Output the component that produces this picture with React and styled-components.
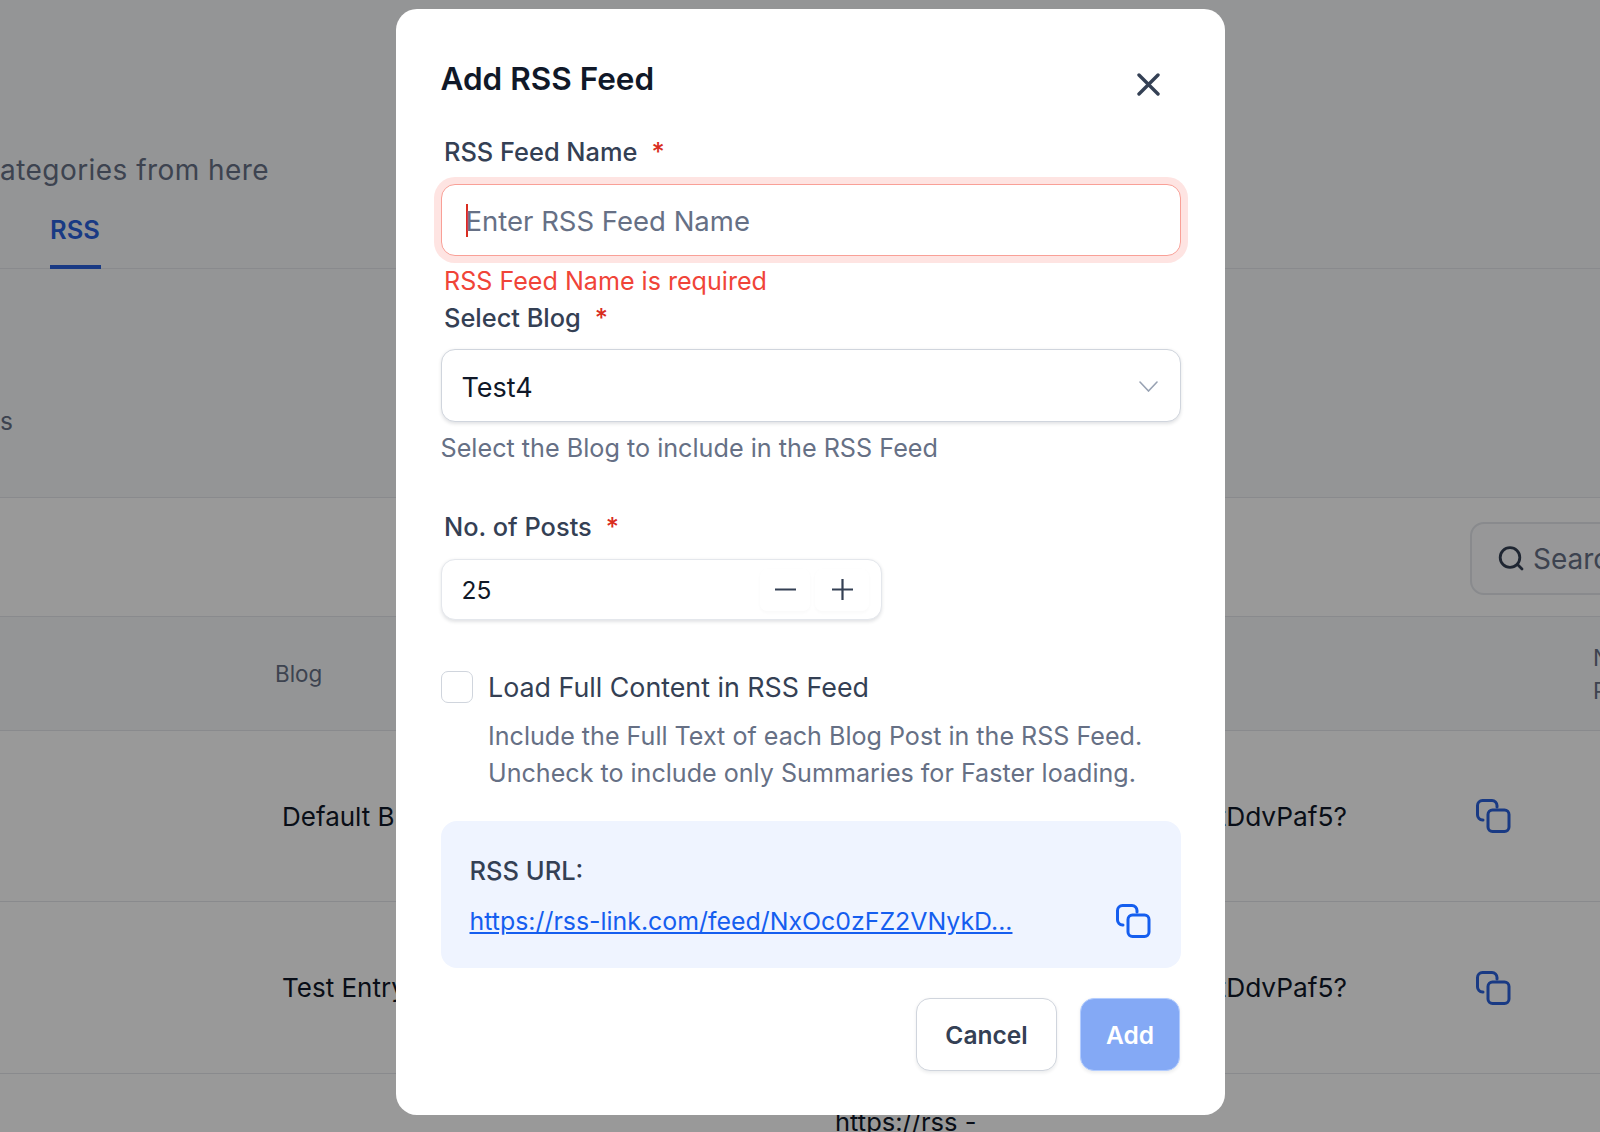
import React from "react";
import styled, { createGlobalStyle } from "styled-components";

const Global = createGlobalStyle`
  html, body { margin: 0; padding: 0; height: 100%; }
  body { font-family: Inter, "Noto Sans", sans-serif; background: #fff; overflow: hidden; }
  * { box-sizing: border-box; }
`;

/* ---------- page behind the dialog ---------- */
const Page = styled.div`
  height: 1132px;
  overflow: hidden;
  display: flex;
  flex-direction: column;
  background: #fff;
`;
const Intro = styled.header`
  flex: none;
  height: 269px;
  background: #f7f8fa;
  border-bottom: 1px solid #e4e7ec;
  display: flex;
  flex-direction: column;
  align-items: flex-start;
`;
const Subtitle = styled.p`
  margin: 152px 0 0;
  font-size: 28px;
  line-height: 36px;
  letter-spacing: 0.45px;
  color: #667085;
  white-space: nowrap;
`;
const Tab = styled.div`
  flex: none;
  margin: 6px 0 0 50px;
  width: 51px;
  height: 75px;
  padding-top: 19px;
  font-size: 25.5px;
  line-height: 34px;
  font-weight: 600;
  color: #2a62dc;
  border-bottom: 4px solid #2a62dc;
`;
const Section = styled.div`
  flex: none;
  height: 229px;
  background: #f7f8fa;
  border-bottom: 1px solid #e4e7ec;
  padding-top: 136px;
  font-size: 24.5px;
  line-height: 32px;
  color: #667085;
`;
const Toolbar = styled.div`
  flex: none;
  height: 119px;
  background: #fff;
  border-bottom: 1px solid #e4e7ec;
  padding: 24px 0 0 1470px;
`;
const Search = styled.div`
  width: 240px;
  height: 73px;
  display: flex;
  align-items: center;
  gap: 9px;
  padding-left: 26px;
  border: 2px solid #e4e7ec;
  border-radius: 14px;
  background: #fcfcfd;
  font-size: 28px;
  color: #667085;
  white-space: nowrap;
`;
const HeadRow = styled.div`
  flex: none;
  height: 114px;
  background: #f7f8fa;
  border-bottom: 1px solid #e4e7ec;
  display: grid;
  grid-template-columns: 275px 1318px 100px;
  align-items: center;
  font-size: 22.4px;
  color: #667085;
  white-space: nowrap;
`;
const HeadWrap = styled.div`
  line-height: 33px;
`;
const TableRow = styled.div`
  flex: none;
  height: ${p => p.$h}px;
  background: #fff;
  border-bottom: 1px solid #e4e7ec;
  display: grid;
  grid-template-columns: 282px 800px 265px 129px 1fr;
  align-items: center;
  white-space: nowrap;
  font-size: 26px;
  color: #101828;
`;
const UrlEnd = styled.span`
  text-align: right;
  font-size: 26.3px;
`;
const LastRow = styled.div`
  padding: 31px 0 0 835px;
  font-size: 25.5px;
  line-height: 34px;
  color: #101828;
  white-space: nowrap;
`;

/* ---------- dialog ---------- */
const Scrim = styled.div`
  position: fixed;
  inset: 0;
  background: rgba(0, 0, 0, 0.4);
  display: flex;
  align-items: flex-start;
  padding: 9px 0 0 396px;
`;
const Modal = styled.div`
  width: 829px;
  height: 1106px;
  background: #fff;
  border-radius: 21px;
  padding: 48px 44.5px 44px;
  display: flex;
  flex-direction: column;
  align-items: stretch;
  color: #344054;
`;
const ModalHeader = styled.div`
  display: flex;
  justify-content: space-between;
  align-items: flex-start;
`;
const Title = styled.h2`
  margin: 0;
  font-size: 31.5px;
  line-height: 44px;
  font-weight: 600;
  letter-spacing: 0;
  color: #101828;
`;
const CloseButton = styled.button`
  border: 0;
  background: none;
  padding: 0;
  margin: 16px 21px 0 0;
  width: 23px;
  height: 23px;
  display: block;
  color: #344054;
`;
const Label = styled.label`
  display: block;
  margin: ${p => p.$mt}px 0 0 3.5px;
  font-size: 25.4px;
  line-height: 35px;
  font-weight: 500;
  color: #344054;
`;
const Star = styled.span`
  margin-left: 14px;
  color: #d92d20;
`;
const Field = styled.div`
  display: flex;
  align-items: center;
  margin-top: ${p => p.$mt}px;
  height: ${p => p.$h}px;
  width: ${p => p.$w || "100%"};
  border-radius: 14px;
  background: #fff;
  border: ${p => (p.$error ? "1.75px solid #f9a097" : p.$soft ? "1.75px solid #e4e7ec" : "1.75px solid #d0d5dd")};
  box-shadow: ${p =>
    p.$error
      ? "0 0 0 7px #fee4e2"
      : "0 1.75px 3.5px rgba(16, 24, 40, 0.12)"};
  padding: 0 ${p => p.$pr || 20}px 0 20px;
`;
const Caret = styled.span`
  flex: none;
  width: 2px;
  height: 33px;
  margin: 0 -2px 0 4px;
  background: #d92d20;
`;
const NameInput = styled.input`
  flex: 1;
  min-width: 0;
  border: 0;
  outline: 0;
  padding: 1px 0 0 0;
  background: none;
  font: 400 27.5px Inter, sans-serif;
  color: #101828;
  &::placeholder { color: #667085; opacity: 1; }
`;
const Value = styled.span`
  flex: 1;
  padding-top: ${p => p.$pt || 0}px;
  font-size: ${p => p.$size}px;
  color: #101828;
`;
const Chevron = styled.svg`
  flex: none;
  margin: 1px 2px 0 0;
`;
const ErrorText = styled.div`
  margin: 10px 0 0 3.5px;
  font-size: 25.1px;
  line-height: 30px;
  color: #f04438;
`;
const Hint = styled.div`
  margin-top: 9px;
  font-size: 25.2px;
  line-height: 35px;
  color: #667085;
`;
const Stepper = styled.button`
  flex: none;
  width: ${p => p.$w}px;
  height: 42px;
  margin-left: ${p => p.$ml || 0}px;
  padding: 0;
  border: 0;
  border-radius: 7px;
  background: #fff;
  box-shadow: 0 1.75px 3.5px rgba(16, 24, 40, 0.025);
  display: flex;
  align-items: center;
  justify-content: center;
  color: #344054;
`;
const CheckRow = styled.div`
  margin-top: 49px;
  display: flex;
  align-items: center;
  gap: 15.5px;
`;
const CheckBox = styled.span`
  flex: none;
  width: 32px;
  height: 32px;
  border-radius: 7px;
  border: 1.75px solid #d0d5dd;
  background: #fff;
`;
const CheckLabel = styled.span`
  padding-top: 1px;
  font-size: 26.8px;
  line-height: 34px;
  color: #344054;
`;
const CheckHelp = styled.p`
  margin: 13.5px 0 0 47.5px;
  font-size: 25.1px;
  line-height: 37px;
  color: #667085;
`;
const UrlBox = styled.div`
  margin-top: 29px;
  height: 148px;
  border-radius: 16px;
  background: #eff4ff;
  padding: 33px 30px 0 29px;
`;
const UrlTitle = styled.div`
  font-size: 25.5px;
  line-height: 34px;
  font-weight: 500;
  color: #344054;
`;
const UrlLine = styled.div`
  margin-top: 15px;
  display: flex;
  justify-content: space-between;
  align-items: center;
`;
const UrlLink = styled.a`
  font-size: 24.9px;
  line-height: 36px;
  color: #155eef;
  text-decoration: underline;
`;
const CopyButton = styled.button`
  border: 0;
  background: none;
  padding: 0;
  display: block;
  height: 34px;
  width: 35px;
  color: ${p => p.$color || "#155eef"};
`;
const Actions = styled.div`
  margin-top: 30px;
  padding-right: 0.5px;
  display: flex;
  justify-content: flex-end;
  gap: 23px;
`;
const ActionButton = styled.button`
  height: 73px;
  width: ${p => p.$w}px;
  border-radius: 14px;
  border: 1.75px solid ${p => (p.$primary ? "#b2ccff" : "#d0d5dd")};
  background: ${p => (p.$primary ? "#84a9f5" : "#fff")};
  color: ${p => (p.$primary ? "#fff" : "#344054")};
  font: 600 24.5px Inter, sans-serif;
  box-shadow: 0 1.75px 3.5px rgba(16, 24, 40, 0.08);
`;

const CopyIcon = () => (
  <svg width="35" height="34" viewBox="0 0 35 34" fill="none" stroke="currentColor" strokeWidth="3" strokeLinecap="round" aria-hidden="true">
    <path d="M7 21H6.5A5 5 0 0 1 1.5 16V6.5A5 5 0 0 1 6.5 1.5H16A5 5 0 0 1 21 6.5V8" />
    <rect x="12" y="11" width="21" height="21.5" rx="4.5" />
  </svg>
);

const SearchGlyph = styled.svg`
  flex: none;
`;

const SearchIcon = () => (
  <SearchGlyph width="26" height="25" viewBox="0 0 26 25" fill="none" stroke="#344054" strokeWidth="2.8" strokeLinecap="round" aria-hidden="true">
    <circle cx="12" cy="11.5" r="9.8" />
    <path d="M19.5 18.5L24 23" />
  </SearchGlyph>
);

const Rule = ({ d }) => (
  <svg width="21" height="21" viewBox="0 0 21 21" fill="none" stroke="currentColor" strokeWidth="2.2" strokeLinecap="round" aria-hidden="true">
    <path d={d} />
  </svg>
);

export default function App() {
  return (
    <>
      <Global />
      <Page>
        <Intro>
          <Subtitle>ategories from here</Subtitle>
          <Tab>RSS</Tab>
        </Intro>
        <Section>s</Section>
        <Toolbar>
          <Search>
            <SearchIcon />
            Search
          </Search>
        </Toolbar>
        <HeadRow>
          <span />
          <span>Blog</span>
          <HeadWrap>No. of<br />Posts</HeadWrap>
        </HeadRow>
        <TableRow $h={171}>
          <span />
          <span>Default Blog</span>
          <UrlEnd>tDdvPaf5?</UrlEnd>
          <span />
          <CopyButton $color="#2a62dc"><CopyIcon /></CopyButton>
        </TableRow>
        <TableRow $h={172}>
          <span />
          <span>Test Entry</span>
          <UrlEnd>tDdvPaf5?</UrlEnd>
          <span />
          <CopyButton $color="#2a62dc"><CopyIcon /></CopyButton>
        </TableRow>
        <LastRow>https://rss -</LastRow>
      </Page>

      <Scrim>
        <Modal>
          <ModalHeader>
            <Title>Add RSS Feed</Title>
            <CloseButton aria-label="Close">
              <svg width="23" height="23" viewBox="0 0 23 23" fill="none" stroke="currentColor" strokeWidth="3.4" strokeLinecap="round" aria-hidden="true">
                <path d="M2 2L21 21M21 2L2 21" />
              </svg>
            </CloseButton>
          </ModalHeader>

          <Label $mt={33}>RSS Feed Name<Star>*</Star></Label>
          <Field $mt={15} $h={73} $error>
            <Caret />
            <NameInput placeholder="Enter RSS Feed Name" />
          </Field>
          <ErrorText>RSS Feed Name is required</ErrorText>

          <Label $mt={4}>Select Blog<Star>*</Star></Label>
          <Field $mt={14} $h={73}>
            <Value $size={27} $pt={3}>Test4</Value>
            <Chevron width="19" height="11" viewBox="0 0 19 11" fill="none" stroke="#98a2b3" strokeWidth="1.6" strokeLinecap="round" aria-hidden="true">
              <path d="M1 1L9.5 10L18 1" />
            </Chevron>
          </Field>
          <Hint>Select the Blog to include in the RSS Feed</Hint>

          <Label $mt={43}>No. of Posts<Star>*</Star></Label>
          <Field $mt={15} $h={62} $w="441.5px" $pr={12} $soft>
            <Value $size={24.5}>25</Value>
            <Stepper $w={50} aria-label="Decrease"><Rule d="M0 10.5H21" /></Stepper>
            <Stepper $w={54} $ml={5} aria-label="Increase"><Rule d="M0 10.5H21M10.5 0V21" /></Stepper>
          </Field>

          <CheckRow>
            <CheckBox />
            <CheckLabel>Load Full Content in RSS Feed</CheckLabel>
          </CheckRow>
          <CheckHelp>
            Include the Full Text of each Blog Post in the RSS Feed.<br />
            Uncheck to include only Summaries for Faster loading.
          </CheckHelp>

          <UrlBox>
            <UrlTitle>RSS URL:</UrlTitle>
            <UrlLine>
              <UrlLink href="#">https://rss-link.com/feed/NxOc0zFZ2VNykD...</UrlLink>
              <CopyButton><CopyIcon /></CopyButton>
            </UrlLine>
          </UrlBox>

          <Actions>
            <ActionButton $w={141}>Cancel</ActionButton>
            <ActionButton $w={100} $primary>Add</ActionButton>
          </Actions>
        </Modal>
      </Scrim>
    </>
  );
}
